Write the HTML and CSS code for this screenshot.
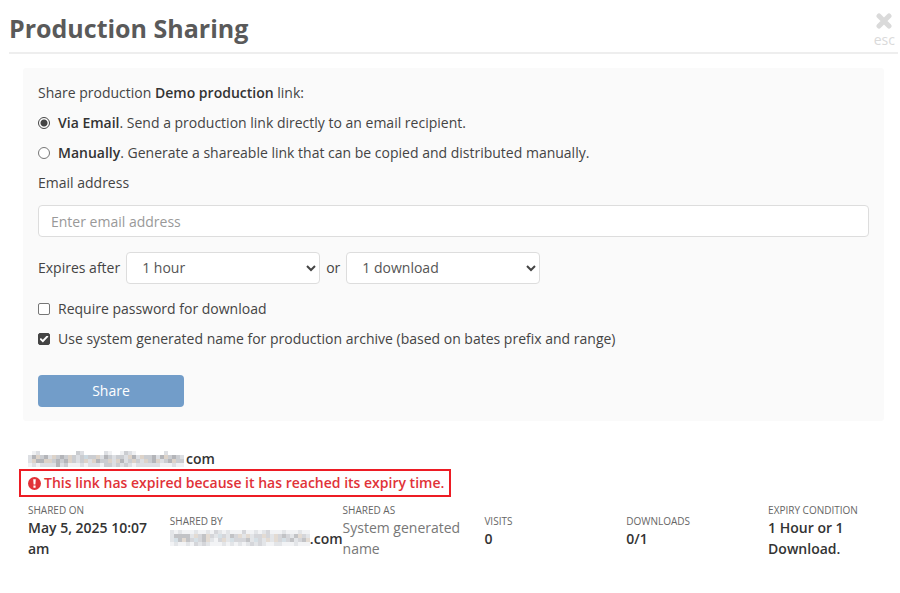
FILE: index.html
```html
<!DOCTYPE html>
<html lang="en">
<head>
<meta charset="utf-8">
<title>Production Sharing</title>
<link rel="stylesheet" href="styles.css">
</head>
<body>
<header class="header">
  <h1 class="title">Production Sharing</h1>
  <button class="close" type="button" aria-label="Close">
    <svg width="16" height="16" viewBox="0 0 16 16" aria-hidden="true"><path d="M3 3l10 10M13 3L3 13" stroke="currentColor" stroke-width="5" stroke-linecap="round"/></svg>
    <span>esc</span>
  </button>
</header>
<main class="content">
  <form class="panel">
    <p>Share production <b>Demo production</b> link:</p>
    <label class="option"><input class="tick radio" type="radio" name="mode" checked><span><b>Via Email</b>. Send a production link directly to an email recipient.</span></label>
    <label class="option"><input class="tick radio" type="radio" name="mode"><span><b>Manually</b>. Generate a shareable link that can be copied and distributed manually.</span></label>
    <label for="email">Email address</label>
    <input class="field email" id="email" type="email" placeholder="Enter email address">
    <div class="expiry">
      <label for="time">Expires after</label>
      <span class="select-wrap"><select class="field select" id="time"><option>1 hour</option></select><svg class="chevron" width="10" height="7" viewBox="0 0 10 7" aria-hidden="true"><path d="M1 1l4 4 4-4"/></svg></span>
      <label for="count">or</label>
      <span class="select-wrap"><select class="field select" id="count"><option>1 download</option></select><svg class="chevron" width="10" height="7" viewBox="0 0 10 7" aria-hidden="true"><path d="M1 1l4 4 4-4"/></svg></span>
    </div>
    <label class="option"><input class="tick box" type="checkbox"><span>Require password for download</span></label>
    <label class="option"><input class="tick box" type="checkbox" checked><span>Use system generated name for production archive (based on bates prefix and range)</span></label>
    <button class="share" type="button">Share</button>
  </form>
  <section class="result">
    <h2 class="recipient"><svg class="mosaic" data-rows="012000000000320000021001321000000020000 245342534353236335243233254253342453432 254455343453235254335254235325345234533 121222242311121222133232321222222111211"></svg>com</h2>
    <p class="alert"><svg width="13" height="13" viewBox="0 0 13 13" aria-hidden="true"><circle cx="6.500" cy="6.500" r="6.500" fill="currentColor"/><path d="M5.200 2.200h2.600l-.4 5.200H5.600zM5.400 8.600h2.200v2.100H5.400z" fill="#fff"/></svg>This link has expired because it has reached its expiry time.</p>
    <dl class="details">
      <div><dt>SHARED ON</dt><dd>May 5, 2025 10:07 am</dd></div>
      <div><dt>SHARED BY</dt><dd class="sender"><svg class="mosaic soft" data-rows="21211121121321211131121231112111211 24444253453263243525233532534324532 26454363452135263334263252536342345 12112132321112121212323211221112111"></svg>.com</dd></div>
      <div><dt>SHARED AS</dt><dd class="plain">System generated name</dd></div>
      <div><dt>VISITS</dt><dd>0</dd></div>
      <div><dt>DOWNLOADS</dt><dd>0/1</dd></div>
      <div><dt>EXPIRY CONDITION</dt><dd>1 Hour or 1 Download.</dd></div>
    </dl>
  </section>
</main>
<script src="mosaic.js"></script>
</body>
</html>
```
FILE: styles.css
```css
* { box-sizing: border-box; }
body { margin: 0; background: #fff; color: #444; font: 14px/30px "Open Sans", sans-serif; }
p, h1, h2, dl, dd { margin: 0; }
b { font-weight: 600; color: #333; }
button, input, select { font: inherit; }

.header { display: flex; justify-content: space-between; margin: 0 2px 0 9px; border-bottom: 2px solid #eee; }
.title { padding-top: 5px; font-size: 25px; line-height: 47px; color: #5a5a5a; }
.close { display: flex; flex-direction: column; align-items: center; margin: 13px 3px 0 0; padding: 0; border: 0; background: none; color: #dadada; font-size: 14px; line-height: 22px; }

.content { padding: 14px 16px 0 23px; }
.panel { display: flex; flex-direction: column; padding: 10px 15px 14px; border-radius: 3px; background: #fafafa; }
.option { display: flex; align-items: center; gap: 8px; }

.tick { appearance: none; width: 12px; height: 12px; margin: 0; border: 1px solid #767676; background: #fff; }
.radio { border-radius: 50%; }
.radio:checked { border-color: #444; background: radial-gradient(circle, #444 3px, #fff 4px); }
.box { border-radius: 2px; }
.box:checked { display: grid; place-content: center; border-color: #444; background: #444; }
.box:checked::after { content: ""; width: 9px; height: 7px; background: #fff; clip-path: polygon(0 55%, 16% 35%, 36% 62%, 82% 0, 100% 16%, 38% 100%); }

.field { height: 32px; border: 1px solid #ddd; border-radius: 4px; background: #fff; color: #555; }
.email { width: 100%; margin-top: 7px; padding: 0 12px; }
.email::placeholder { color: #999; }
.expiry { display: flex; align-items: center; gap: 6px; margin: 15px 0 10px; }
.select-wrap { position: relative; display: flex; }
.select { appearance: none; width: 194px; padding: 0 15px; }
.chevron { position: absolute; top: 13px; right: 4px; fill: none; stroke: #444; stroke-width: 2px; pointer-events: none; }
.share { width: 146px; height: 32px; margin-top: 21px; padding: 0; border: 0; border-radius: 4px; background: #729dc9; color: #fff; }

.result { padding: 28px 0 20px 5px; }
.recipient { display: flex; align-items: center; gap: 2px; font-size: 14px; font-weight: 600; line-height: 20px; color: #333; }
.mosaic { flex: none; }
.soft { opacity: .8; }
.alert { display: flex; align-items: center; gap: 3px; width: fit-content; margin-left: -9px; padding: 0 5px 0 7px; border: 2px solid #ed1c24; color: #e13238; font-weight: 600; line-height: 24px; }
.details { display: grid; grid-template-columns: 142fr 172fr 142fr 142fr 142fr 116fr; align-items: center; margin-top: 7px; line-height: 21px; }
dt { color: #666; font-size: 10px; line-height: 13px; }
dd { color: #333; font-weight: 600; }
.sender { display: flex; align-items: center; white-space: nowrap; }
.plain { color: #777; font-weight: 400; }
```
FILE: mosaic.js
```js
// Draws the pixelated strips that stand in for masked addresses.
const shades = ["", "#f0f1f3", "#dddfe3", "#cbcdd1", "#b4b5b9", "#ddd3c9", "#ccd9e1"];
const cell = 4;
for (const svg of document.querySelectorAll(".mosaic")) {
  const rows = svg.dataset.rows.split(" ");
  svg.setAttribute("width", rows[0].length * cell);
  svg.setAttribute("height", rows.length * cell);
  rows.forEach((row, y) => [...row].forEach((shade, x) => {
    if (shade === "0") return;
    const rect = document.createElementNS("http://www.w3.org/2000/svg", "rect");
    const values = { x: x * cell, y: y * cell, width: cell, height: cell, fill: shades[shade] };
    for (const name in values) rect.setAttribute(name, values[name]);
    svg.append(rect);
  }));
}
```
